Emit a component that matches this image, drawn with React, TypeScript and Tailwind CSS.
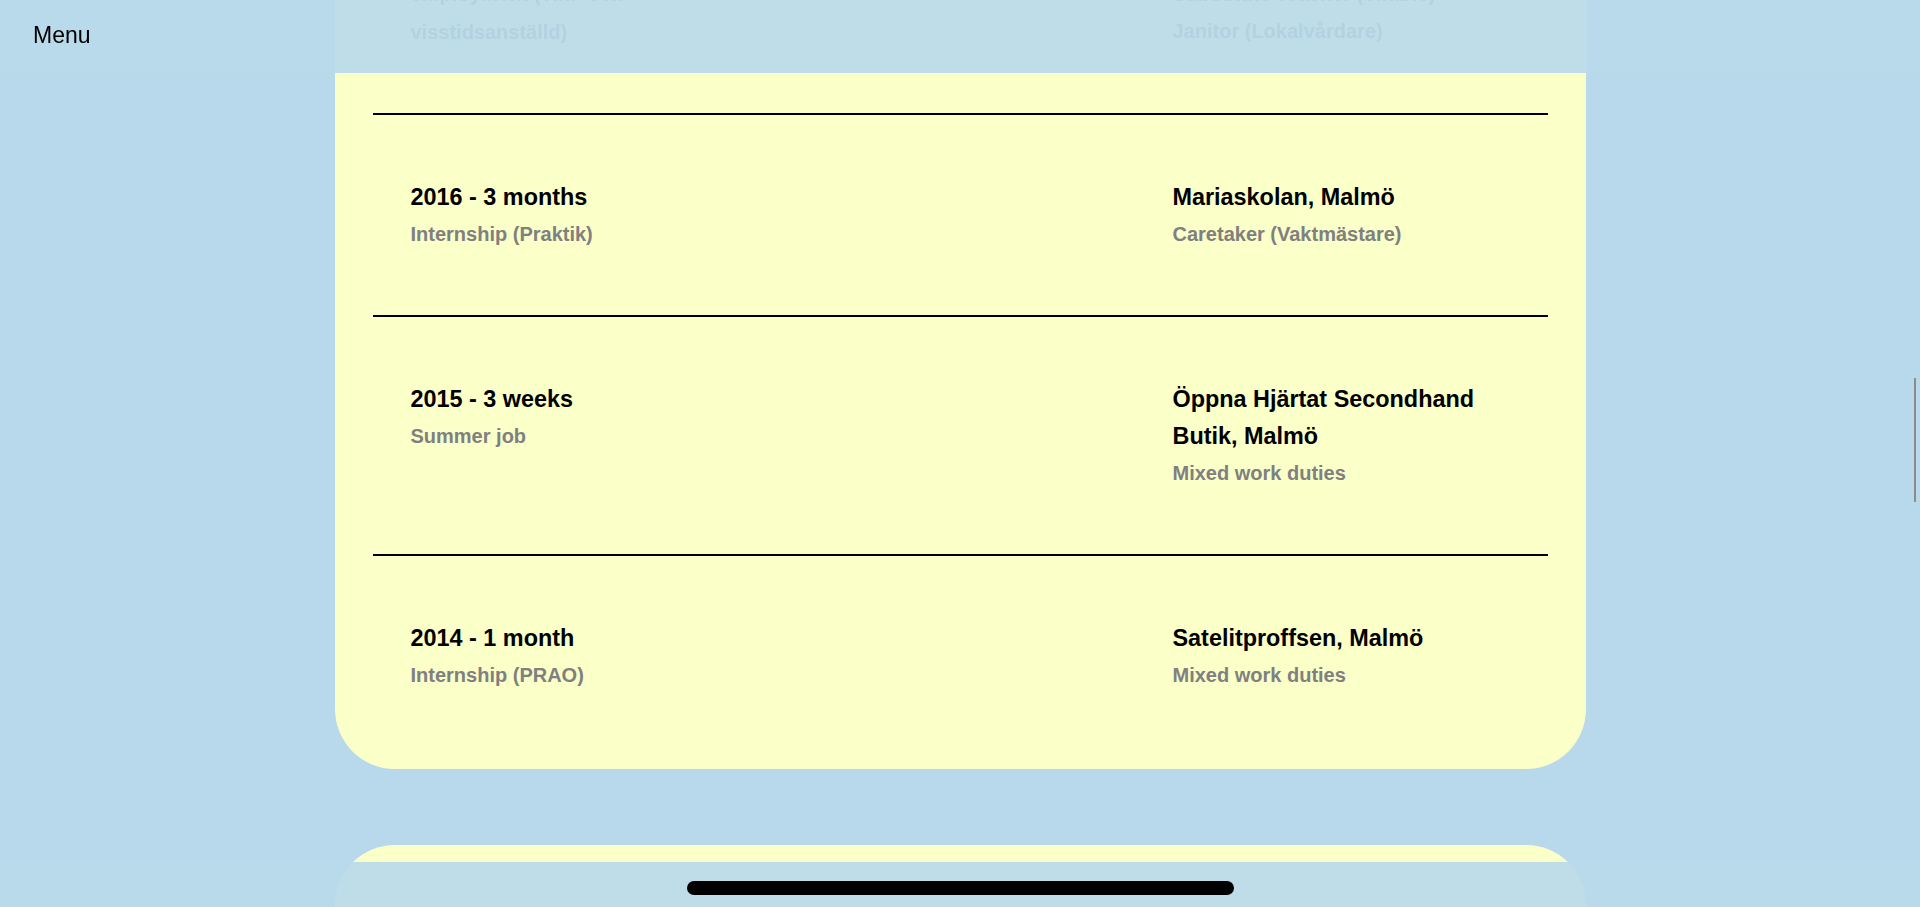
import React from "react";

type Job = {
  when: string;
  kind: string;
  place: string;
  duties: string[];
};

const jobs: Job[] = [
  {
    when: "2017 - 2019",
    kind: "Substitute and temporary employment (Tim- och visstidsanställd)",
    place: "Grundskoleförvaltningen, Malmö Stad",
    duties: ["Substitute Teacher (Vikarie)", "Janitor (Lokalvårdare)"],
  },
  {
    when: "2016 - 3 months",
    kind: "Internship (Praktik)",
    place: "Mariaskolan, Malmö",
    duties: ["Caretaker (Vaktmästare)"],
  },
  {
    when: "2015 - 3 weeks",
    kind: "Summer job",
    place: "Öppna Hjärtat Secondhand Butik, Malmö",
    duties: ["Mixed work duties"],
  },
  {
    when: "2014 - 1 month",
    kind: "Internship (PRAO)",
    place: "Satelitproffsen, Malmö",
    duties: ["Mixed work duties"],
  },
];

function JobRow({ job, first }: { job: Job; first: boolean }) {
  return (
    <div className={first ? "" : "border-t-2 border-black"}>
      <div className="flex justify-between px-[38px] pt-[63.5px] pb-[62px]">
        <div className="w-[337px]">
          <h3 className="text-[23.4px] leading-[37px] font-bold text-black">{job.when}</h3>
          <p className="text-[20px] leading-[37.5px] font-bold text-[#808080]">{job.kind}</p>
        </div>
        <div className="w-[337px]">
          <h3 className="text-[23.4px] leading-[37px] font-bold text-black">{job.place}</h3>
          {job.duties.map((d) => (
            <p key={d} className="text-[20px] leading-[37.5px] font-bold text-[#808080]">
              {d}
            </p>
          ))}
        </div>
      </div>
    </div>
  );
}

export default function App() {
  return (
    <div className="relative h-[907px] overflow-hidden bg-[#b8d9eb] font-['Liberation_Sans',Arial,sans-serif]">
      <div className="-mt-[176px] flex flex-col items-center">
        <div className="w-[1251px] rounded-[60px] bg-[#fbffc8] px-[38px] pt-[14px] pb-[13px]">
          {jobs.map((job, i) => (
            <JobRow key={job.when} job={job} first={i === 0} />
          ))}
        </div>
        <div className="mt-[75.5px] h-[400px] w-[1251px] rounded-t-[60px] bg-[#fbffc8]"></div>
      </div>

      {/* top bar */}
      <div className="fixed top-0 left-0 right-0 h-[73px] bg-[#b8d9eb]/90">
        <div className="pl-[33px] pt-[24px] text-[23px] leading-[23px] text-black">Menu</div>
      </div>

      {/* bottom bar */}
      <div className="fixed bottom-0 left-0 right-0 flex h-[45px] justify-center bg-[#b8d9eb]/90 pt-[19px]">
        <div className="h-[14px] w-[547px] rounded-full bg-black"></div>
      </div>

      {/* scroll thumb */}
      <div className="absolute left-[1914px] top-[378px] h-[124px] w-[2px] bg-[#8b8b8b]"></div>
    </div>
  );
}
